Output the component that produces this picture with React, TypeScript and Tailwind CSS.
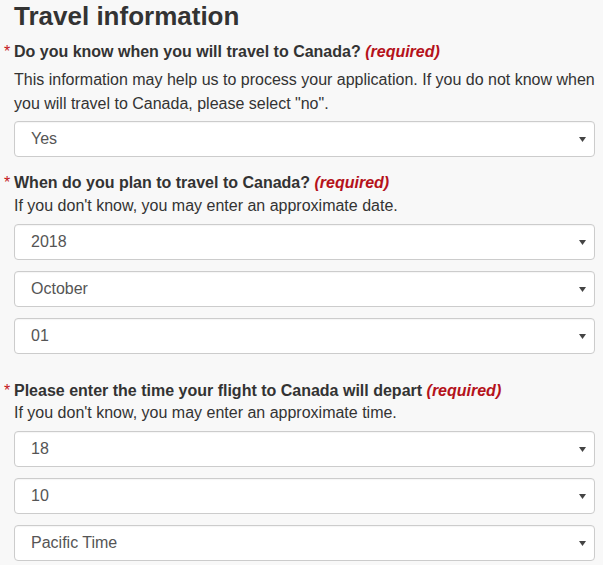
import React from "react";

const font = { fontFamily: '"Liberation Sans", Arial, sans-serif' };

function Arrow() {
  return (
    <svg width="7" height="5" viewBox="0 0 7 5" className="shrink-0">
      <polygon points="0,0 7,0 3.5,5" fill="#444" />
    </svg>
  );
}

function Select({ value, className = "" }: { value: string; className?: string }) {
  return (
    <div
      className={`flex h-[36px] items-center justify-between rounded-[4px] border border-[#cccccc] bg-white pl-[16px] pr-[8px] text-[16px] text-[#555555] shadow-[inset_0_1px_1px_rgba(0,0,0,0.04)] ${className}`}
    >
      <span>{value}</span>
      <Arrow />
    </div>
  );
}

function Label({ children }: { children: React.ReactNode }) {
  return (
    <div className="relative text-[16px] font-bold leading-[22px] text-[#333333]">
      <span className="absolute left-[-10px] top-0 font-normal text-[#c4161c]">*</span>
      {children}{" "}
      <em className="font-bold italic text-[#b5121b]">(required)</em>
    </div>
  );
}

export default function App() {
  return (
    <div className="min-h-[565px] w-[603px] bg-[#f8f8f8] pl-[14px] pr-[8px]" style={font}>
      <h1 className="text-[26px] font-bold leading-[32px] text-[#333333]">Travel information</h1>

      <div className="mt-[9px]">
        <Label>Do you know when you will travel to Canada?</Label>
        <p className="mt-[5px] text-[16px] leading-[24px] text-[#333333]">
          This information may help us to process your application. If you do not know when you will travel to Canada, please select "no".
        </p>
        <Select value="Yes" className="mt-[5px]" />
      </div>

      <div className="mt-[15px]">
        <Label>When do you plan to travel to Canada?</Label>
        <p className="mt-[1px] text-[16px] leading-[22px] text-[#333333]">
          If you don't know, you may enter an approximate date.
        </p>
        <div className="mt-[7px] flex flex-col gap-[11px]">
          <Select value="2018" />
          <Select value="October" />
          <Select value="01" />
        </div>
      </div>

      <div className="mt-[26px]">
        <Label>Please enter the time your flight to Canada will depart</Label>
        <p className="text-[16px] leading-[22px] text-[#333333]">
          If you don't know, you may enter an approximate time.
        </p>
        <div className="mt-[7px] flex flex-col gap-[11px]">
          <Select value="18" />
          <Select value="10" />
          <Select value="Pacific Time" />
        </div>
      </div>
    </div>
  );
}
